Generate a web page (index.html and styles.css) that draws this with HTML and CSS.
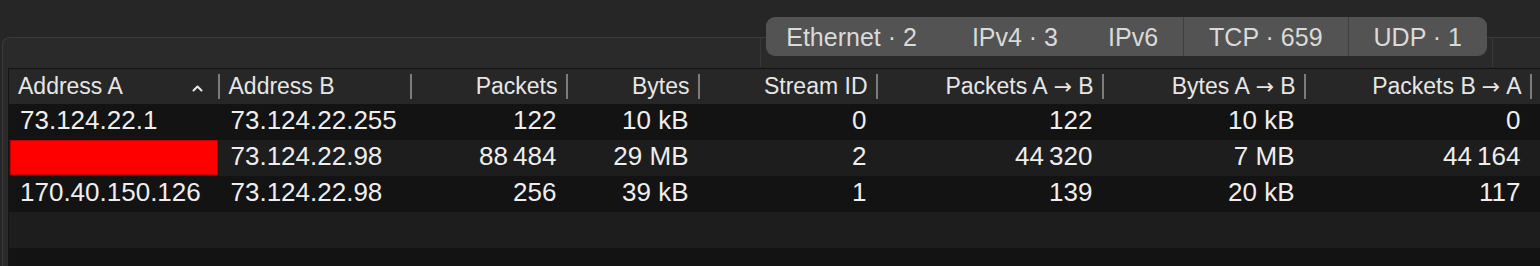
FILE: index.html
```html
<!DOCTYPE html>
<html lang="en">
<head>
    <meta charset="UTF-8">
    <title>Conversations</title>
    <link rel="stylesheet" href="styles.css">
</head>
<body>

<div class="tabbar">
    <div class="segments">
        <span class="segment">Ethernet · 2</span>
        <span class="segment">IPv4 · 3</span>
        <span class="segment">IPv6</span>
        <span class="segment divided">TCP · 659</span>
        <span class="segment divided">UDP · 1</span>
    </div>
</div>

<div class="pane">
    <table class="conversations">
        <colgroup>
            <col class="w-addr-a">
            <col class="w-addr-b">
            <col class="w-packets">
            <col class="w-bytes">
            <col class="w-stream">
            <col class="w-pab">
            <col class="w-bab">
            <col class="w-pba">
            <col>
        </colgroup>
        <thead>
            <tr>
                <th class="left">
                    <div class="sort-head">
                        <span>Address A</span>
                        <svg class="caret" width="11" height="7" viewBox="0 0 11 7"><path d="M1.5 5.5 L5.5 1.5 L9.5 5.5" fill="none" stroke="#e8e8e8" stroke-width="2" stroke-linecap="round" stroke-linejoin="round"/></svg>
                    </div>
                </th>
                <th class="left">Address B</th>
                <th>Packets</th>
                <th>Bytes</th>
                <th>Stream ID</th>
                <th>Packets A<span class="arrow">→</span>B</th>
                <th>Bytes A<span class="arrow">→</span>B</th>
                <th>Packets B<span class="arrow">→</span>A</th>
                <th class="filler"></th>
            </tr>
        </thead>
        <tbody>
            <tr>
                <td class="left">73.124.22.1</td>
                <td class="left">73.124.22.255</td>
                <td>122</td>
                <td>10 kB</td>
                <td>0</td>
                <td>122</td>
                <td>10 kB</td>
                <td>0</td>
                <td></td>
            </tr>
            <tr>
                <td class="redacted-cell"><div class="redacted"></div></td>
                <td class="left">73.124.22.98</td>
                <td>88&thinsp;484</td>
                <td>29 MB</td>
                <td>2</td>
                <td>44&thinsp;320</td>
                <td>7 MB</td>
                <td>44&thinsp;164</td>
                <td></td>
            </tr>
            <tr>
                <td class="left">170.40.150.126</td>
                <td class="left">73.124.22.98</td>
                <td>256</td>
                <td>39 kB</td>
                <td>1</td>
                <td>139</td>
                <td>20 kB</td>
                <td>117</td>
                <td></td>
            </tr>
            <tr class="empty"><td colspan="9"></td></tr>
            <tr class="empty last"><td colspan="9"></td></tr>
        </tbody>
    </table>
</div>

</body>
</html>
```

FILE: styles.css
```css
body {
    font-family: "Liberation Sans", Arial, sans-serif;
    margin: 0;
    background: #262626;
    color: #eeeeee;
    height: 266px;
    overflow: hidden;
}

/* segmented control over the pane border */
.tabbar {
    position: relative;
    z-index: 1;
    display: flex;
    justify-content: flex-end;
    padding-top: 17px;
    padding-right: 53px;
}

.segments {
    position: relative;
    display: flex;
    height: 39px;
    background: #535353;
    border-radius: 9px;
}

.segments::before {
    content: "";
    position: absolute;
    left: -6px;
    right: -6px;
    top: 20px;
    bottom: -11px;
    border-left: 1px solid #383838;
    border-right: 1px solid #383838;
    z-index: -1;
}

.segment {
    padding: 0 25px;
    font-size: 25px;
    line-height: 40px;
    color: #dadada;
}

.segment:first-child {
    padding-left: 20px;
    padding-right: 30px;
}

.segment.divided {
    border-left: 1px solid #3f3f3f;
}

.pane {
    margin: -19px 0 0 2px;
    padding: 30px 0 0 5px;
    background: #2a2a2a;
    border-top: 1px solid #3a3a3a;
    border-left: 1px solid #3a3a3a;
    border-top-left-radius: 8px;
}

.conversations {
    width: 100%;
    table-layout: fixed;
    border-collapse: collapse;
    border-top: 1px solid #141414;
    border-left: 1px solid #141414;
}

.w-addr-a { width: 211px; }
.w-addr-b { width: 192px; }
.w-packets { width: 156px; }
.w-bytes { width: 132px; }
.w-stream { width: 178px; }
.w-pab { width: 226px; }
.w-bab { width: 202px; }
.w-pba { width: 226px; }

.conversations th {
    position: relative;
    height: 35px;
    padding: 0 10px 0 9px;
    background: #272727;
    font-size: 23px;
    font-weight: normal;
    line-height: 25px;
    color: #e6e6e6;
    text-align: right;
    white-space: nowrap;
}

.conversations th::after {
    content: "";
    position: absolute;
    right: 0;
    top: 5px;
    bottom: 5px;
    width: 2px;
    background: #7c7c7c;
}

.conversations th.filler::after {
    display: none;
}

.conversations th.left {
    text-align: left;
}

.arrow {
    margin: 0 6px;
    font-family: "DejaVu Sans", sans-serif;
    font-size: 22px;
}

.sort-head {
    display: flex;
    justify-content: space-between;
    align-items: center;
    padding-right: 7px;
}

.caret {
    margin-top: 3px;
}

.conversations td {
    height: 36px;
    padding: 0 11px 0 11px;
    font-size: 26px;
    line-height: 33px;
    text-align: right;
    white-space: nowrap;
    vertical-align: top;
}

.conversations td.left {
    text-align: left;
}

.conversations tbody tr:nth-child(odd) {
    background: #131313;
}

.conversations tbody tr:nth-child(even) {
    background: #1d1d1d;
}

.conversations tr.last td {
    height: 18px;
}

.conversations td.redacted-cell {
    padding: 0;
}

.redacted {
    height: 35px;
    margin: 0 2px 1px 1px;
    background: #fe0000;
    border: 1px solid #c40000;
    box-sizing: border-box;
}
```
